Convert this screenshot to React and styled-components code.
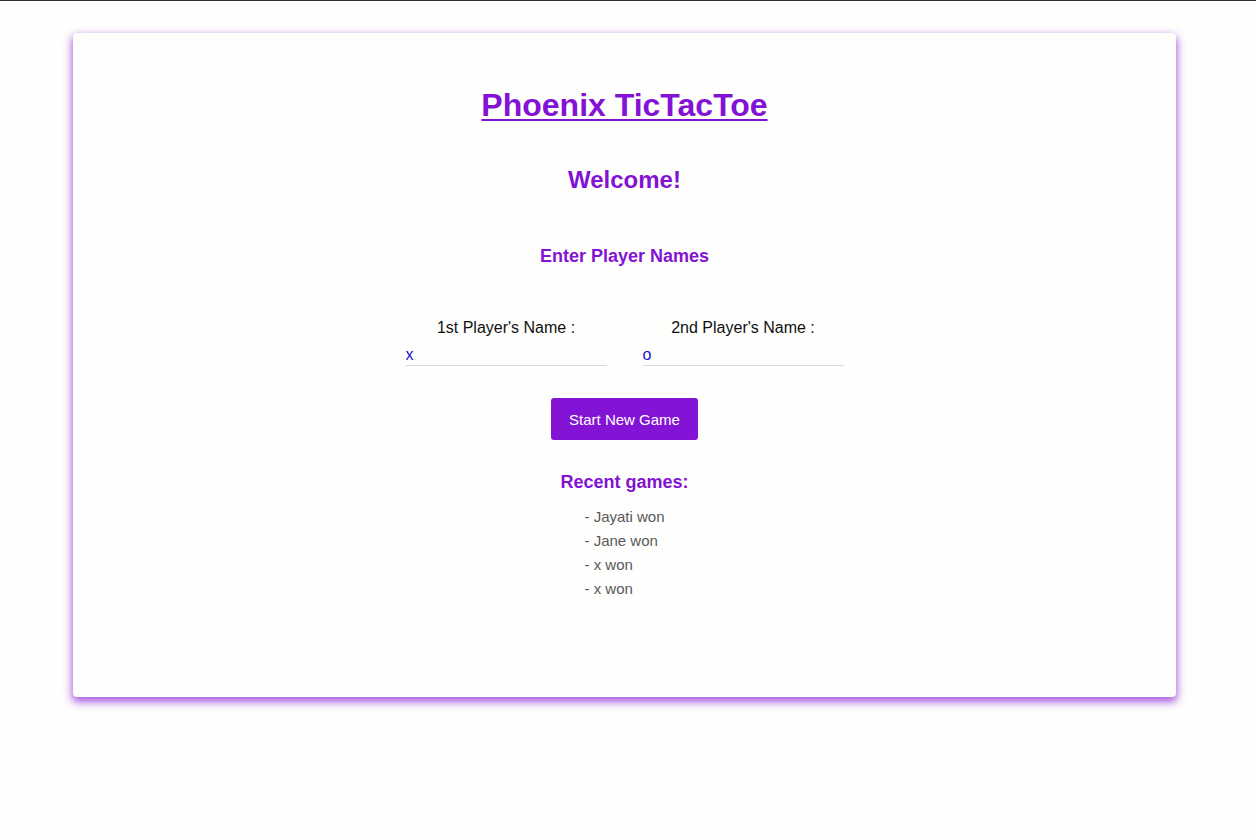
import styled, { createGlobalStyle } from "styled-components";

const GlobalStyle = createGlobalStyle`
  html, body {
    margin: 0;
    padding: 0;
    background: #fefefc;
  }
  body {
    border-top: 1px solid #2b2f2f;
    font-family: "Liberation Sans", Arial, sans-serif;
  }
`;

const Page = styled.div`
  padding: 32px 80px 60px 73px;
`;

const Card = styled.div`
  width: 1103px;
  box-sizing: border-box;
  background: #fefefd;
  border-radius: 4px;
  box-shadow: 0 4px 8px 1px rgba(131, 18, 212, 0.7);
  padding: 54px 0 96px;
  display: flex;
  flex-direction: column;
  align-items: center;
  color: #8312d4;
`;

const Title = styled.h1`
  margin: 0;
  font-size: 32px;
  font-weight: 700;
  text-decoration: underline;
  text-underline-offset: 3px;
  text-decoration-thickness: 2px;
`;

const Welcome = styled.h2`
  margin: 42px 0 0;
  font-size: 24px;
  font-weight: 700;
`;

const Heading = styled.h3`
  margin: ${(p) => p.$top}px 0 0;
  font-size: 18px;
  font-weight: 700;
`;

const Players = styled.div`
  display: flex;
  gap: 36px;
  margin-top: 52px;
`;

const Field = styled.label`
  display: flex;
  flex-direction: column;
  align-items: center;
  width: 201px;
  color: #111;
  font-size: 16px;
`;

const NameInput = styled.input`
  margin-top: 2px;
  width: 100%;
  box-sizing: border-box;
  height: 27px;
  border: none;
  border-bottom: 1px solid #d9d9d9;
  background: transparent;
  padding: 5px 0 0;
  font-family: inherit;
  font-size: 16px;
  color: #1a0fd0;
  outline: none;
`;

const StartButton = styled.button`
  margin-top: 32px;
  height: 42px;
  padding: 0 18px;
  border: none;
  border-radius: 3px;
  background: #8314d6;
  color: #fff;
  font-family: inherit;
  font-size: 15px;
  cursor: pointer;
`;

const GameList = styled.ul`
  list-style: none;
  margin: 12px 0 0;
  padding: 0;
  text-align: left;
  color: #5a5a5a;
  font-size: 15px;
  line-height: 24px;
`;

const games = ["Jayati won", "Jane won", "x won", "x won"];

export default function App() {
  return (
    <>
      <GlobalStyle />
      <Page>
        <Card>
          <Title>Phoenix TicTacToe</Title>
          <Welcome>Welcome!</Welcome>
          <Heading $top={52}>Enter Player Names</Heading>
          <Players>
            <Field>
              1st Player's Name :
              <NameInput defaultValue="x" />
            </Field>
            <Field>
              2nd Player's Name :
              <NameInput defaultValue="o" />
            </Field>
          </Players>
          <StartButton>Start New Game</StartButton>
          <Heading $top={32}>Recent games:</Heading>
          <GameList>
            {games.map((g, i) => (
              <li key={i}>- {g}</li>
            ))}
          </GameList>
        </Card>
      </Page>
    </>
  );
}
